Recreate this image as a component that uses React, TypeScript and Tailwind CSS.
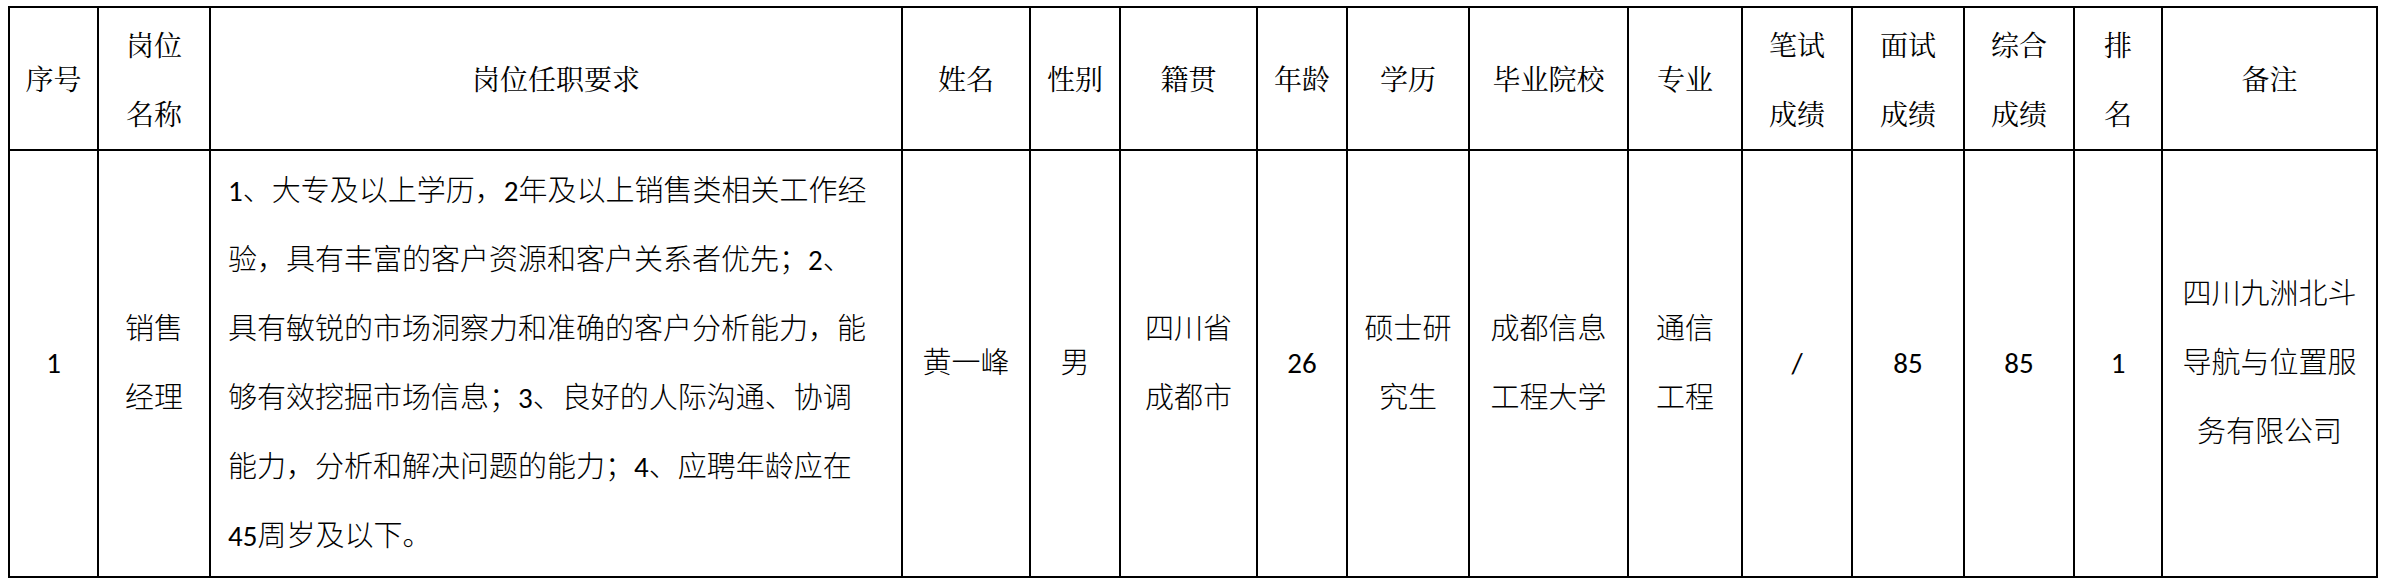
import React from "react";

const headFont = "font-['Noto_Serif_CJK_SC','Noto_Sans_CJK_SC',serif]";
const bodyFont = "font-['Carlito','Lato','Noto_Sans_CJK_SC',sans-serif]";

const widths = [89, 112, 692, 128, 90, 137, 90, 122, 159, 114, 110, 112, 110, 88, 215];

const headers: string[][] = [
  ["序号"],
  ["岗位", "名称"],
  ["岗位任职要求"],
  ["姓名"],
  ["性别"],
  ["籍贯"],
  ["年龄"],
  ["学历"],
  ["毕业院校"],
  ["专业"],
  ["笔试", "成绩"],
  ["面试", "成绩"],
  ["综合", "成绩"],
  ["排", "名"],
  ["备注"],
];

const requirement = [
  "1、大专及以上学历，2年及以上销售类相关工作经",
  "验，具有丰富的客户资源和客户关系者优先；2、",
  "具有敏锐的市场洞察力和准确的客户分析能力，能",
  "够有效挖掘市场信息；3、良好的人际沟通、协调",
  "能力，分析和解决问题的能力；4、应聘年龄应在",
  "45周岁及以下。",
];

const row: string[][] = [
  ["1"],
  ["销售", "经理"],
  requirement,
  ["黄一峰"],
  ["男"],
  ["四川省", "成都市"],
  ["26"],
  ["硕士研", "究生"],
  ["成都信息", "工程大学"],
  ["通信", "工程"],
  ["/"],
  ["85"],
  ["85"],
  ["1"],
  ["四川九洲北斗", "导航与位置服", "务有限公司"],
];

function Lines({ lines }: { lines: string[] }) {
  return (
    <div className="flex flex-col">
      {lines.map((l, i) => (
        <span key={i} className="block whitespace-nowrap leading-[69px]">
          {l}
        </span>
      ))}
    </div>
  );
}

export default function App() {
  return (
    <div className="h-[584px] w-[2388px] bg-white pl-[8px] pt-[6px] text-black">
      <table className="table-fixed border-collapse border-2 border-black">
        <colgroup>
          {widths.map((w, i) => (
            <col key={i} style={{ width: w }} />
          ))}
        </colgroup>
        <thead>
          <tr className="h-[143px]">
            {headers.map((h, i) => (
              <th
                key={i}
                className={`border-2 border-black p-0 text-center align-middle text-[28px] font-normal ${headFont}`}
              >
                <Lines lines={h} />
              </th>
            ))}
          </tr>
        </thead>
        <tbody>
          <tr className="h-[427px]">
            {row.map((c, i) => (
              <td
                key={i}
                className={`border-2 border-black p-0 align-middle text-[29px] font-light ${bodyFont} ${
                  i === 2 ? "pl-[17px] text-left" : "text-center"
                }`}
              >
                <Lines lines={c} />
              </td>
            ))}
          </tr>
        </tbody>
      </table>
    </div>
  );
}
